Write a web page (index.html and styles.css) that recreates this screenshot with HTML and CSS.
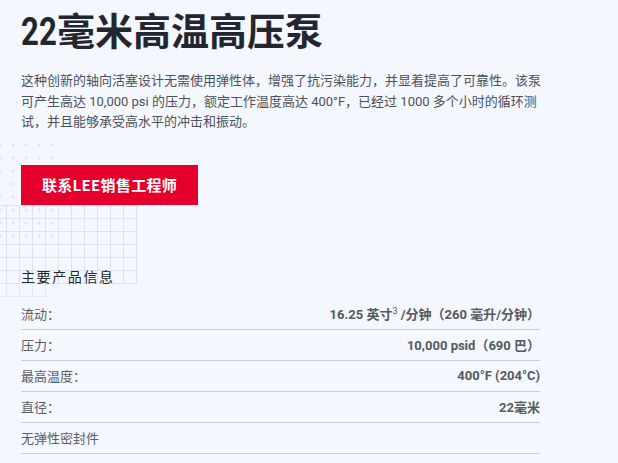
FILE: index.html
```html
<!DOCTYPE html>
<html lang="zh-CN">
<head>
<meta charset="utf-8">
<link rel="stylesheet" href="styles.css">
</head>
<body>
<div class="deco-dots"></div>
<div class="deco-grid"></div>
<div class="deco-tail"></div>
<main class="page">
  <h1 class="title"><span class="num">22</span>毫米高温高压泵</h1>
  <p class="intro">这种创新的轴向活塞设计无需使用弹性体，增强了抗污染能力，并显着提高了可靠性。该泵可产生高达 10,000 psi 的压力，额定工作温度高达 400°F，已经过 1000 多个小时的循环测试，并且能够承受高水平的冲击和振动。</p>
  <a class="cta" href="#">联系LEE销售工程师</a>
  <h2 class="specs-title">主要产品信息</h2>
  <ul class="specs">
    <li class="row"><span class="label">流动：</span><span class="value">16.25 英寸<sup>3</sup> /分钟（260 毫升/分钟）</span></li>
    <li class="row"><span class="label">压力：</span><span class="value">10,000 psid（690 巴）</span></li>
    <li class="row"><span class="label">最高温度：</span><span class="value">400°F (204°C)</span></li>
    <li class="row"><span class="label">直径：</span><span class="value">22毫米</span></li>
    <li class="row"><span class="label">无弹性密封件</span></li>
  </ul>
</main>
</body>
</html>
```

FILE: styles.css
```css
html, body {
  margin: 0;
  padding: 0;
  background: #f4f7fd;
}
body {
  position: relative;
  font-family: Roboto, "Noto Sans CJK SC", sans-serif;
  color: #4a4e57;
  width: 618px;
  height: 463px;
  overflow: hidden;
}
.deco-dots {
  position: absolute;
  left: 0;
  top: 139px;
  width: 62px;
  height: 104px;
  background-image: radial-gradient(circle, #dfe3ec 1.2px, transparent 1.6px);
  background-size: 13px 13px;
  background-position: 6.5px -0.5px;
}
.deco-grid {
  position: absolute;
  left: 0;
  top: 205px;
  width: 137px;
  height: 79px;
  background-image:
    linear-gradient(to right, #dde1ea 1px, transparent 1px),
    linear-gradient(to bottom, #dde1ea 1px, transparent 1px);
  background-size: 13px 13px;
  background-position: 6px 0, 0 0;
}
.deco-tail {
  position: absolute;
  left: 0;
  top: 284px;
  width: 46px;
  height: 13px;
  opacity: 0.7;
  background-image:
    linear-gradient(to right, #dde1ea 1px, transparent 1px),
    linear-gradient(to bottom, #dde1ea 1px, transparent 1px);
  background-size: 13px 13px;
  background-position: 6px 0, 0 12px;
}
.page {
  position: relative;
  padding: 0 0 0 21px;
  width: 520px;
}
.title {
  margin: 0;
  padding-top: 5px;
  height: 49px;
  font-family: "Noto Sans CJK SC", sans-serif;
  font-weight: 700;
  font-size: 38px;
  line-height: 48px;
  color: #23262e;
}
.num {
  display: inline-block;
  line-height: 1;
  font-family: Roboto, sans-serif;
  font-weight: 700;
  transform: scaleX(0.82);
  transform-origin: left center;
  margin-right: -7.5px;
}
.intro {
  margin: 17px 0 0;
  width: 521px;
  font-size: 13px;
  line-height: 20.5px;
  color: #4d515a;
}
.cta {
  display: inline-flex;
  align-items: center;
  justify-content: center;
  margin-top: 32px;
  width: 177px;
  height: 40px;
  background: #e4002b;
  color: #fff;
  font-family: "Noto Sans CJK SC", sans-serif;
  font-weight: 700;
  font-size: 15px;
  letter-spacing: 0.3px;
  text-decoration: none;
}
.specs-title {
  margin: 62px 0 0;
  font-size: 14px;
  font-weight: 400;
  letter-spacing: 1.6px;
  line-height: 20px;
  color: #23262e;
}
.specs {
  list-style: none;
  margin: 12px 0 0;
  padding: 0;
  width: 519px;
}
.row {
  display: flex;
  justify-content: space-between;
  align-items: center;
  height: 30px;
  border-bottom: 1px solid #c8cdd8;
  font-size: 13px;
}
.label {
  color: #5a5e67;
}
.value {
  font-weight: 700;
  color: #555961;
}
.value sup {
  font-size: 9px;
  font-weight: 400;
  vertical-align: 5px;
  line-height: 0;
}
```
